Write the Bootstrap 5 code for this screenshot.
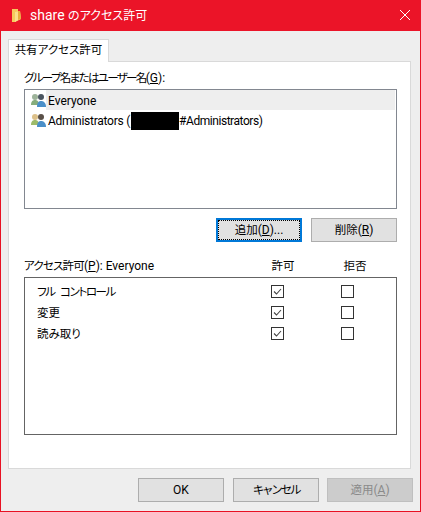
<!DOCTYPE html>
<html lang="ja">
<head>
<meta charset="utf-8">
<title>share のアクセス許可</title>
<link href="https://cdn.jsdelivr.net/npm/bootstrap@5.3.0/dist/css/bootstrap.min.css" rel="stylesheet">
<style>
html,body{margin:0;height:512px;overflow:hidden}
body{font-family:Roboto,"Noto Sans CJK JP",sans-serif;font-size:12px;line-height:16px;color:#000;background:#eee;font-feature-settings:"palt"}
.jp{font-size:11.5px}
.ks1{letter-spacing:-.8px}
.ks2{letter-spacing:-1.4px;word-spacing:4px}
.ks3{letter-spacing:-2.2px}
.ks4{letter-spacing:-1.65px}
.tight{letter-spacing:-.25px}
.tighter{letter-spacing:-.45px}
.dlg{width:421px;height:512px;border:solid #e81123;border-width:0 1px 1px 1px;background:#eeeeee}
.ttl{height:31px;margin:0 -1px;background:#eb1428;color:#fff;padding:0 0 1px 12px}
.ttl-txt{margin-left:9px;font-size:14px}
.ttl-jp{font-size:12px}
.ttl-x{width:12px;height:12px;margin-right:10px}
.tabzone{padding:8px 9px 0 7px}
.wtab{width:101px;height:23px;background:#fff;border:1px solid #d9d9d9;border-bottom:0;text-align:center;line-height:20px;margin-bottom:-1px;position:relative;z-index:1}
.wpanel{height:408px;background:#fff;border:1px solid #d9d9d9;padding:8px 13px 0 15px}
.lbl{height:19px;line-height:16px}
.ubox{height:120px;border:1px solid #828790;background:#fff;padding:0 1px 0 5px}
.urow{height:20px}
.urow-t{flex:1;height:20px;padding:1px 0 0 2px;line-height:20px}
.urow.sel .urow-t{background:#eee}
.wbtn{width:86px;height:24px;background:#e1e1e1;border:1px solid #adadad;line-height:22px;text-align:center;padding:0;color:#000;font-size:12px}
.wbtn.fcs{border:2px solid #0078d7;line-height:20px;position:relative}
.wbtn.fcs::after{content:"";position:absolute;inset:0;border:1px dotted #000}
.wbtn.off{background:#ccc;border-color:#bfbfbf;color:#8a8a8a;margin-left:-1px}
.btnrow{gap:9px;margin-top:9px}
.plabel{margin-top:16px;height:19px}
.colh1{margin-left:auto;width:28px;margin-right:44px;text-align:center}
.colh2{width:28px;margin-right:28px;text-align:center}
.pbox{height:158px;border:1px solid #646464;background:#fff;padding:3px 0 0 12px}
.prow{height:21px}
.pname{width:234px;padding-top:1px}
.wchk{width:13px;height:13px;border:1px solid #333;background:#fff;display:block;flex:none}
.wchk svg{display:block}
.c2{margin-left:57px}
.foot{gap:9px;padding:9px 7px 0 0}
.mask{width:48px;height:18px;background:#000;margin-left:1px}
u{text-underline-offset:1px}
</style>
</head>
<body>
<div class="dlg d-flex flex-column">
  <div class="ttl d-flex align-items-center">
    <svg width="9" height="13" viewBox="0 0 9 13" aria-hidden="true"><path d="M0 0h6v11l-3 2H0z" fill="#f5cb5c"/><path d="M3 3l5-1 1 8-6 3z" fill="#fbe08a"/><path d="M6 2l2 0 1 8-3 1z" fill="#e8ad3c"/></svg>
    <span class="ttl-txt">share <span class="ttl-jp">のアクセス許可</span></span>
    <svg class="ttl-x ms-auto" viewBox="0 0 12 12" aria-label="閉じる"><path d="M1 1l10 10M11 1L1 11" stroke="#fff" stroke-width="1"/></svg>
  </div>
  <div class="tabzone">
    <div class="wtab jp">共有アクセス許可</div>
    <div class="wpanel">
      <div class="lbl"><span class="jp ks4">グループ名またはユーザー名</span>(<u>G</u>):</div>
      <div class="ubox">
        <div class="urow sel d-flex align-items-center">
          <svg width="16" height="16" viewBox="0 0 16 16" aria-hidden="true"><circle cx="5" cy="5" r="3" fill="#9db39a"/><path d="M1 13c0-4 2-5 4-5s4 1 4 5z" fill="#86ad7c"/><circle cx="11" cy="5" r="3" fill="#4a5560"/><path d="M7 15c0-5 2-6 4-6s5 1 5 6z" fill="#4a8fc8"/></svg>
          <span class="urow-t">Everyone</span>
        </div>
        <div class="urow d-flex align-items-center">
          <svg width="16" height="16" viewBox="0 0 16 16" aria-hidden="true"><circle cx="5" cy="5" r="3" fill="#dcc089"/><path d="M1 13c0-4 2-5 4-5s4 1 4 5z" fill="#9dbb6a"/><circle cx="11" cy="5" r="3" fill="#5a5048"/><path d="M7 15c0-5 2-6 4-6s5 1 5 6z" fill="#4a8fc8"/></svg>
          <span class="urow-t tight d-flex align-items-center">Administrators (<span class="mask"></span><span class="tighter">#Administrators)</span></span>
        </div>
      </div>
      <div class="btnrow d-flex justify-content-end">
        <button type="button" class="wbtn fcs"><span class="jp">追加</span>(<u>D</u>)...</button>
        <button type="button" class="wbtn"><span class="jp">削除</span>(<u>R</u>)</button>
      </div>
      <div class="plabel d-flex">
        <span><span class="jp ks1">アクセス許可</span>(<u>P</u>): Everyone</span>
        <span class="colh1 jp">許可</span>
        <span class="colh2 jp">拒否</span>
      </div>
      <div class="pbox">
        <div class="prow d-flex align-items-center"><span class="pname jp ks2">フル コントロール</span>
          <span class="wchk"><svg width="11" height="11" viewBox="0 0 11 11"><path d="M2 5.5l2.5 2.5L9 3" fill="none" stroke="#444" stroke-width="1.1"/></svg></span><span class="wchk c2"></span></div>
        <div class="prow d-flex align-items-center"><span class="pname jp">変更</span>
          <span class="wchk"><svg width="11" height="11" viewBox="0 0 11 11"><path d="M2 5.5l2.5 2.5L9 3" fill="none" stroke="#444" stroke-width="1.1"/></svg></span><span class="wchk c2"></span></div>
        <div class="prow d-flex align-items-center"><span class="pname jp">読み取り</span>
          <span class="wchk"><svg width="11" height="11" viewBox="0 0 11 11"><path d="M2 5.5l2.5 2.5L9 3" fill="none" stroke="#444" stroke-width="1.1"/></svg></span><span class="wchk c2"></span></div>
      </div>
    </div>
  </div>
  <div class="foot d-flex justify-content-end">
    <button type="button" class="wbtn">OK</button>
    <button type="button" class="wbtn"><span class="jp ks3">キャンセル</span></button>
    <button type="button" class="wbtn off"><span class="jp">適用</span>(<u>A</u>)</button>
  </div>
</div>
<script src="https://cdn.jsdelivr.net/npm/bootstrap@5.3.0/dist/js/bootstrap.bundle.min.js"></script>
</body>
</html>
